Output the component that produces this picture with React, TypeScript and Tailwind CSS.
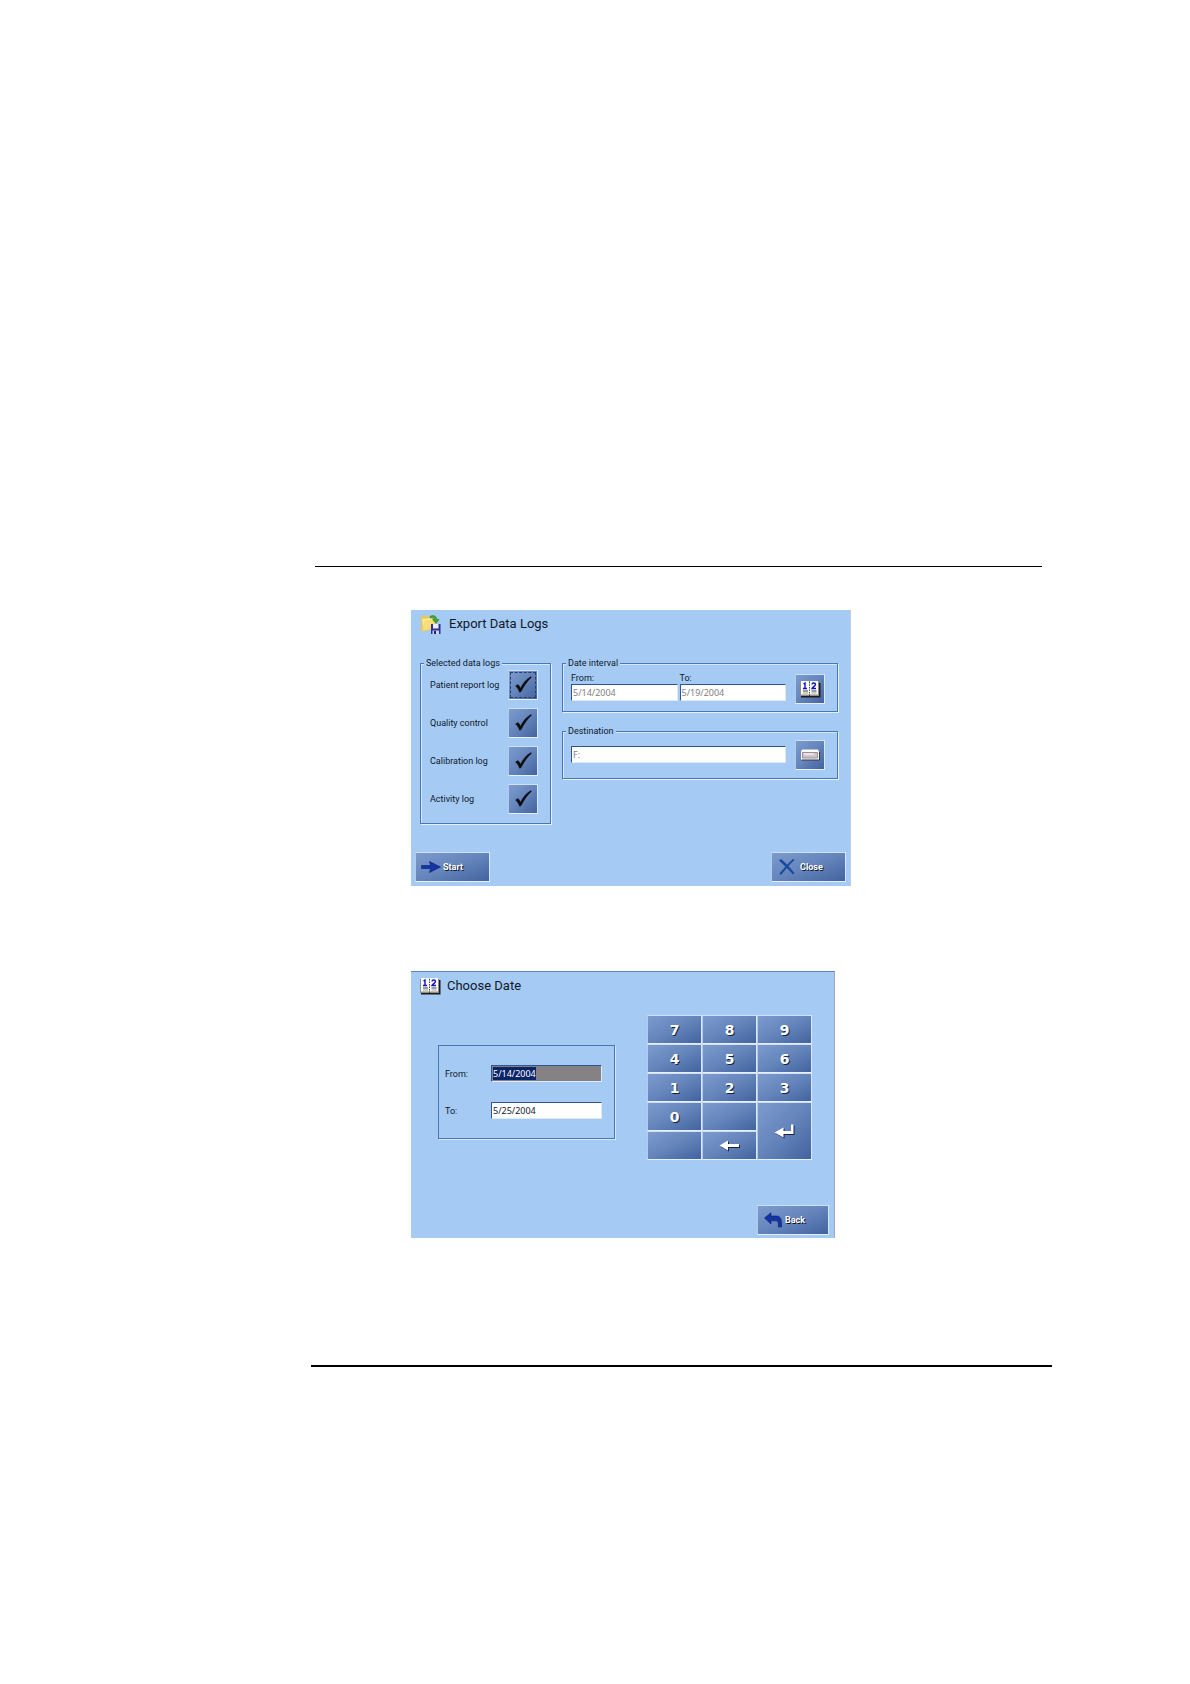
import { useEffect, useRef } from "react";
import clsx from "clsx";

const logs = [
  { id: "patient", label: "Patient report log", focused: true },
  { id: "quality", label: "Quality control" },
  { id: "calibration", label: "Calibration log" },
  { id: "activity", label: "Activity log" },
];

const keys = ["7", "8", "9", "4", "5", "6", "1", "2", "3", "0"];

const face =
  "bg-linear-to-br from-[#7d9bcd] via-[#6484bb] to-[#43639f] border border-t-[#d0e0f7] border-l-[#b5cbec] border-r-[#dbe8fa] border-b-[#e6effc]";

const field =
  "block w-full border border-t-[#2f5590] border-l-[#2f5590] border-r-[#dfeaf8] border-b-[#dfeaf8] px-px font-['Noto_Sans'] text-[9px] leading-3 outline-none";

const FolderSaveIcon = () => (
  <svg viewBox="0 0 21 21" className="h-[21px] w-[21px] shrink-0" aria-hidden="true">
    <path d="M1 3.5 2 1.500h5l1.500 1.500h6v12l-11.500 2.500-2-1z" fill="#e8c65a" />
    <path d="M2 5 9 4l6.500 1v9L3.500 16.500z" fill="#fbe892" />
    <path d="M2 16.500 5 7l11-2-2 9.500z" fill="#f8dd77" />
    <path d="M10 2.500c3-2 6.500-.5 7 3h2l-3 4-3.500-4h2c-.5-1.500-2-2.200-4.500-1.500z" fill="#3fa535" stroke="#257a20" strokeWidth=".5" />
    <path d="M11 10h9.500v10h-9.500z" fill="#2c2f9e" />
    <path d="M13 10h5.500v4.500H13z" fill="#e9eefb" />
    <path d="M12.500 16.500h6.500v3.500h-6.500z" fill="#cfd5e6" />
    <path d="M14 17h2v3h-2z" fill="#20226e" />
  </svg>
);

const BookIcon = () => (
  <svg viewBox="0 0 21 17" className="h-[17px] w-[21px] shrink-0" aria-hidden="true">
    <path d="M1 2h19.500v14.500H1z" fill="#1c1c1c" />
    <path d="M0 1h19v14H0z" fill="#8f8f88" />
    <path d="M1 0h7.500l1 1 1-1H18v13.500H1z" fill="#fbfbf5" />
    <path d="M9.500 1v14" stroke="#444" strokeWidth="1" strokeDasharray="1.500 1" />
    <path d="M3.500 3 5 2v5.500M3 7.500h4M12 3.500c0-2 3.500-2 3.500 0 0 1.500-3 2.500-3.500 4h4" fill="none" stroke="#1212c8" strokeWidth="1.400" />
    <path d="M3 10h5M11.500 10h5" stroke="#3c3c58" strokeWidth="1" />
    <path d="M3 12h5M11.500 12h5" stroke="#a0a0a0" strokeWidth="1" />
  </svg>
);

const DriveIcon = () => (
  <svg viewBox="0 0 20 12" className="h-3 w-5" aria-hidden="true">
    <path d="M2 .5h16l1 2v8.500H1V2.500z" fill="#fafafa" />
    <path d="M1.500 11h18V3" fill="none" stroke="#34343e" strokeWidth="1" />
    <path d="M2.500 3.500h15v5.500h-15z" fill="#cfc6c9" stroke="#857a80" strokeWidth=".8" />
    <path d="M4 5h10" stroke="#f1ecee" strokeWidth="1.500" />
  </svg>
);

const CheckIcon = () => (
  <svg viewBox="0 0 30 30" className="pointer-events-none absolute inset-0" aria-hidden="true">
    <path d="M7.500 16 10 14.500c1 .8 1.800 2.200 2.500 3.700C15 13 18.500 9 23 6.500l.5.8C19 11.500 16 16 13 21.800l-1.500.5C10.500 19.500 9.500 17.500 7.500 16z" fill="#0c0d10" stroke="#0c0d10" strokeWidth=".4" />
  </svg>
);

const StartIcon = () => (
  <svg viewBox="0 0 20 14" className="h-3.5 w-5" aria-hidden="true">
    <path d="M.5 5.500h9L8.500 1.500 19.500 7l-11 5.500 1-4h-9z" fill="#1434a4" stroke="#0b2070" strokeWidth=".6" />
  </svg>
);

const CloseIcon = () => (
  <svg viewBox="0 0 18 18" className="h-[18px] w-[18px]" aria-hidden="true">
    <path d="M1 2.500 3 1c4 3 9 8.500 13.500 14l-1.500 1.500C10.500 11.500 6 7 1 2.500z" fill="#174a9c" />
    <path d="M16.500 2 15 1C10.500 5 6 10 1.500 15.500L3 17c4-5 8.500-10.500 13.500-15z" fill="#174a9c" />
  </svg>
);

const BackIcon = () => (
  <svg viewBox="0 0 19 16" className="h-4 w-[19px]" aria-hidden="true">
    <path d="M.5 6 7 .8v3.200h5c4.500 0 6 2.500 5.500 11h-3.200c.2-5-.3-6.200-3-6.200H7V12z" fill="#1434a4" stroke="#0b2070" strokeWidth=".6" />
  </svg>
);

const ActionButton = ({ label, children, className }: any) => (
  <button
    type="button"
    className={clsx(
      face,
      "flex h-[30px] items-center text-[9px] leading-3 font-bold text-white [text-shadow:1px_1px_0_#10182c]",
      className
    )}
  >
    {children}
    {label}
  </button>
);

const Group = ({ legend, children, className }: any) => (
  <fieldset
    className={clsx(
      "min-w-0 border border-[#4a76b4] shadow-[1px_1px_0_#e6f1ff,inset_1px_1px_0_#d6e7fc]",
      className
    )}
  >
    <legend className="ml-[3px] bg-[#a5caf3] px-0.5 text-[9px] leading-3">{legend}</legend>
    {children}
  </fieldset>
);

const ExportPanel = () => (
  <section className="w-full max-w-[440px] border-r border-[#c5cbe0] bg-[#a5caf3] pt-[3px] pb-1">
    <header className="flex items-center gap-2 pl-[9px]">
      <FolderSaveIcon />
      <h2 className="text-[13px] leading-[22px]">Export Data Logs</h2>
    </header>

    <div className="mt-[22px] flex items-start gap-[11px] pr-3 pl-[9px]">
      <Group legend="Selected data logs" className="w-[131px] shrink-0">
        <div className="space-y-2 pt-px pr-3 pb-[9px] pl-[9px]">
          {logs.map(({ id, label, focused }) => (
            <label key={id} className="flex items-center justify-between text-[9px] leading-3">
              <span className="whitespace-nowrap">{label}</span>
              <span className="relative h-[30px] w-[30px] shrink-0">
                <input type="checkbox" defaultChecked className={clsx(face, "block h-full w-full appearance-none")} />
                <CheckIcon />
                {focused && (
                  <span className="pointer-events-none absolute inset-0.5 border border-dashed border-[#26406f]" />
                )}
              </span>
            </label>
          ))}
        </div>
      </Group>

      <div className="min-w-0 flex-1 space-y-[13px]">
        <Group legend="Date interval">
          <div className="flex items-start gap-[9px] pt-[3px] pr-3 pb-[7px] pl-2">
            <div className="grid flex-1 grid-cols-2 gap-0.5">
              <label className="text-[9px] leading-3">
                From:
                <input type="text" readOnly defaultValue="5/14/2004" className={clsx(field, "h-[17px] bg-white text-[#808080]")} />
              </label>
              <label className="text-[9px] leading-3">
                To:
                <input type="text" readOnly defaultValue="5/19/2004" className={clsx(field, "h-[17px] bg-white text-[#808080]")} />
              </label>
            </div>
            <button type="button" aria-label="Choose date" className={clsx(face, "mt-0.5 flex h-[30px] w-[30px] items-center justify-center")}>
              <BookIcon />
            </button>
          </div>
        </Group>

        <Group legend="Destination">
          <div className="flex items-start gap-[9px] pt-[3px] pr-3 pb-2 pl-2">
            <input type="text" readOnly aria-label="Destination" defaultValue="F:" className={clsx(field, "mt-1.5 h-[17px] flex-1 bg-white text-[#808080]")} />
            <button type="button" aria-label="Choose drive" className={clsx(face, "flex h-[30px] w-[30px] shrink-0 items-center justify-center")}>
              <DriveIcon />
            </button>
          </div>
        </Group>
      </div>
    </div>

    <footer className="mt-7 flex justify-between px-1">
      <ActionButton label="Start" className="w-[75px] gap-0.5 pl-[5px]">
        <StartIcon />
      </ActionButton>
      <ActionButton label="Close" className="w-[75px] gap-1 pl-1.5">
        <CloseIcon />
      </ActionButton>
    </footer>
  </section>
);

const Keypad = () => (
  <div className="grid w-[165px] auto-rows-[29px] grid-cols-3">
    {keys.map((key) => (
      <button
        key={key}
        type="button"
        className={clsx(face, "font-['DejaVu_Sans'] text-[14px] leading-4 font-bold text-white [text-shadow:1px_1px_0_#16223c]")}
      >
        {key}
      </button>
    ))}
    <button type="button" aria-label="Blank" className={face} />
    <button type="button" aria-label="Enter" className={clsx(face, "row-span-2 flex items-center justify-center")}>
      <svg viewBox="0 0 21 14" className="h-3.5 w-[21px] drop-shadow-[1px_1px_0_#16223c]" aria-hidden="true">
        <path d="M.5 8.500 9.500 3.500V7H17V.5h2.500V10h-10v3.500z" fill="#fff" />
      </svg>
    </button>
    <button type="button" aria-label="Blank" className={face} />
    <button type="button" aria-label="Backspace" className={clsx(face, "flex items-center justify-center")}>
      <svg viewBox="0 0 21 11" className="h-[11px] w-[21px] drop-shadow-[1px_1px_0_#16223c]" aria-hidden="true">
        <path d="M.5 5.500 9 .5v3.500h11v3H9v3.500z" fill="#fff" />
      </svg>
    </button>
  </div>
);

const DatePanel = () => {
  const fromRef = useRef<HTMLInputElement>(null);

  // start date is selected, ready to be typed over
  useEffect(() => {
    fromRef.current?.focus({ preventScroll: true });
    fromRef.current?.select();
  }, []);

  return (
    <section className="w-full max-w-[424px] border-t border-r border-t-[#5f83b5] border-r-[#a3a9b6] bg-[#a5caf3] pt-[5px] pb-[3px]">
      <header className="flex items-center gap-1.5 pl-[9px]">
        <BookIcon />
        <h2 className="text-[13px] leading-[18px]">Choose Date</h2>
      </header>

      <div className="mt-5 flex items-start gap-8 pl-[27px]">
        <div className="mt-[30px] w-[177px] space-y-5 border border-[#4a76b4] py-[19px] pr-3 pl-1.5 shadow-[1px_1px_0_#d6e7fc]">
          <label className="flex items-center text-[9px] leading-3">
            <span className="w-[46px] shrink-0">From:</span>
            <input
              ref={fromRef}
              type="text"
              defaultValue="5/14/2004"
              className={clsx(field, "h-[17px] bg-[#848284] text-white selection:bg-[#0a246a] selection:text-white")}
            />
          </label>
          <label className="flex items-center text-[9px] leading-3">
            <span className="w-[46px] shrink-0">To:</span>
            <input type="text" defaultValue="5/25/2004" className={clsx(field, "h-[17px] bg-white")} />
          </label>
        </div>
        <Keypad />
      </div>

      <footer className="mt-[45px] flex justify-end pr-[5px]">
        <ActionButton label="Back" className="w-[72px] gap-0.5 pl-1.5">
          <BackIcon />
        </ActionButton>
      </footer>
    </section>
  );
};

const App = () => {
  return (
    <main className="min-h-screen bg-white pt-[566px] pr-[138px] pb-16 pl-[311px] font-['Roboto','Noto_Sans',sans-serif] text-[#10182c]">
      <hr className="mr-[10px] ml-1 border-t border-black" />
      <div className="mt-[43px] space-y-[85px] pl-[100px]">
        <ExportPanel />
        <DatePanel />
      </div>
      <hr className="mt-[127px] border-t-2 border-black" />
    </main>
  );
};

export default App;
